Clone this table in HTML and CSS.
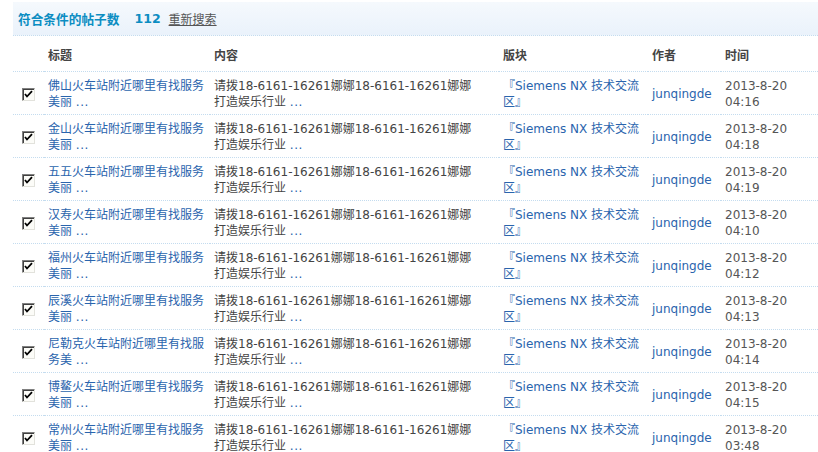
FILE: index.html
```html
<!DOCTYPE html>
<html lang="zh-CN">
<head>
<meta charset="utf-8">
<title>搜索结果</title>
<link rel="stylesheet" href="styles.css">
</head>
<body>
<div class="wrap">
  <div class="sumbar">
    <span class="sumlabel">符合条件的帖子数</span>
    <span class="sumnum">112</span>
    <a class="research" href="#">重新搜索</a>
  </div>
  <table class="list">
    <colgroup>
      <col class="c-chk"><col class="c-title"><col class="c-content"><col class="c-board"><col class="c-author"><col class="c-time">
    </colgroup>
    <thead>
      <tr><th></th><th>标题</th><th>内容</th><th>版块</th><th>作者</th><th>时间</th></tr>
    </thead>
    <tbody id="rows"></tbody>
  </table>
</div>
<script src="app.js"></script>
</body>
</html>
```
FILE: app.js
```js
const data = [
  ["佛山火车站附近哪里有找服务美丽", "04:16"],
  ["金山火车站附近哪里有找服务美丽", "04:18"],
  ["五五火车站附近哪里有找服务美丽", "04:19"],
  ["汉寿火车站附近哪里有找服务美丽", "04:10"],
  ["福州火车站附近哪里有找服务美丽", "04:12"],
  ["辰溪火车站附近哪里有找服务美丽", "04:13"],
  ["尼勒克火车站附近哪里有找服务美", "04:14"],
  ["博鳌火车站附近哪里有找服务美丽", "04:15"],
  ["常州火车站附近哪里有找服务美丽", "03:48"]
];
const tb = document.getElementById("rows");
const check = '<span class="chk"><svg width="9" height="9" viewBox="0 0 9 9"><path d="M1 4 L3 6.5 L8 1.2" fill="none" stroke="#000" stroke-width="1.8"/></svg></span>';
tb.innerHTML = data.map(([t, tm]) => `
<tr>
  <td class="chkcell">${check}</td>
  <td class="title"><a href="#">${t}&nbsp;<span class="dots">...</span></a></td>
  <td class="content">请拨18-6161-16261娜娜18-6161-16261娜娜<br>打造娱乐行业&nbsp;<span class="dots">...</span></td>
  <td class="board"><a href="#">『Siemens NX 技术交流区』</a></td>
  <td class="author"><a href="#">junqingde</a></td>
  <td class="time">2013-8-20<br>${tm}</td>
</tr>`).join("");
```
FILE: styles.css
```css
html, body {
  margin: 0;
  padding: 0;
  background: #fff;
}
body {
  font-family: "DejaVu Sans", "Noto Sans CJK SC", sans-serif;
  font-size: 12px;
  color: #444;
}
a { text-decoration: none; color: #2a64ad; }
.wrap {
  padding: 2px 0 0 13px;
}
.sumbar {
  height: 33px;
  display: flex;
  align-items: center;
  padding-left: 5px;
  background: linear-gradient(#f5f9fd, #eaf2fb);
  border-bottom: 1px dotted #c4dcef;
}
.sumlabel {
  font-weight: bold;
  color: #0b8dc2;
  font-size: 12.7px;
}
.sumnum {
  font-weight: bold;
  color: #0b8dc2;
  font-size: 12.5px;
  margin-left: 15px;
}
.research {
  margin-left: 8px;
  color: #555;
  text-decoration: underline;
}
.list {
  width: 805px;
  border-collapse: collapse;
  table-layout: fixed;
}
.c-chk { width: 31px; }
.c-title { width: 166px; }
.c-content { width: 289px; }
.c-board { width: 149px; }
.c-author { width: 73px; }
.c-time { width: 97px; }
th {
  height: 34px;
  text-align: left;
  font-weight: bold;
  color: #444;
  padding: 1px 0 0 4px;
  border-bottom: 1px dotted #c4dcef;
  vertical-align: middle;
}
td {
  height: 41px;
  padding: 1px 0 0 4px;
  line-height: 16px;
  vertical-align: middle;
  border-bottom: 1px dotted #c4dcef;
  word-break: break-all;
}
td.chkcell { padding: 1px 0 0 9px; }
.chk {
  display: block;
  width: 9px;
  height: 9px;
  padding: 1px;
  margin-top: 2px;
  background: #fcfcf8;
  border-top: 1px solid #808080;
  border-left: 1px solid #808080;
  border-bottom: 1px solid #e2e2dc;
  border-right: 1px solid #e2e2dc;
  box-shadow: inset 1px 1px 0 #404040;
}
.chk svg { display: block; }
.title a { color: #2a64ad; }
.dots { color: #2a64ad; letter-spacing: 0.5px; }
.content { color: #444; }
.board a { color: #2a64ad; }
.author a { color: #2a64ad; }
.time { color: #555; }
```
